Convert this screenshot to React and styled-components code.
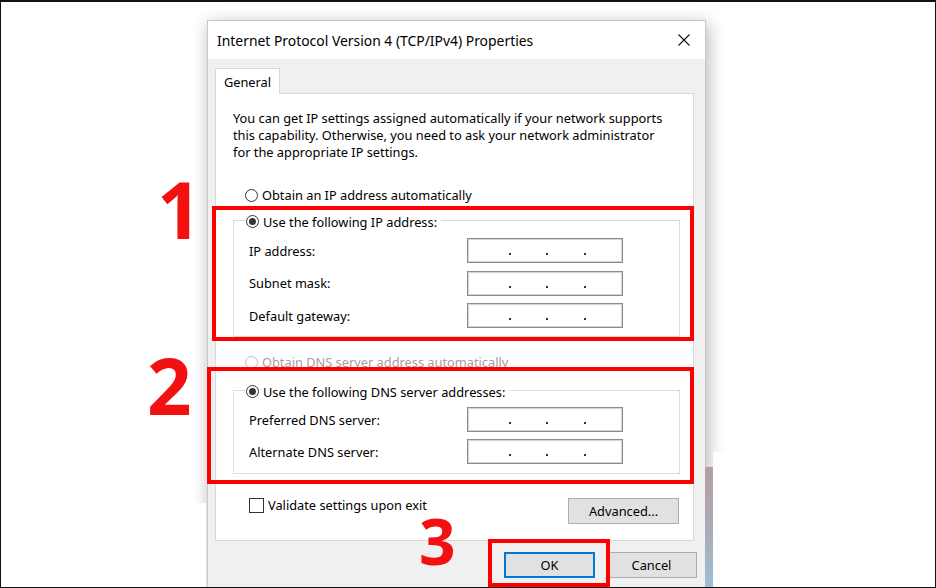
import React from "react";
import styled, { createGlobalStyle } from "styled-components";

const GlobalStyle = createGlobalStyle`
  html, body {
    margin: 0;
    padding: 0;
    background: #fff;
  }
  body {
    font-family: "Noto Sans", "Open Sans", sans-serif;
  }
`;

const Frame = styled.div`
  position: relative;
  width: 936px;
  height: 588px;
  overflow: hidden;
  background: #fff;
  padding: 20px 0 0 207px;
  box-sizing: border-box;

  &::after {
    content: "";
    position: absolute;
    inset: 0;
    border: 1px solid #111;
    border-top-width: 2px;
    pointer-events: none;
    z-index: 20;
  }
`;

const Dialog = styled.div`
  width: 499px;
  box-sizing: border-box;
  background: #f0f0f0;
  border: 1px solid #c8c8c8;
  box-shadow: 2px 4px 16px rgba(0, 0, 0, 0.3);
  font-family: "Noto Sans", sans-serif;
  font-size: 12.8px;
  color: #000;
`;

const TitleBar = styled.div`
  height: 38px;
  background: #fff;
  display: flex;
  align-items: center;
  justify-content: space-between;
  padding: 0 15px 0 9px;
  font-size: 13.9px;
`;

const Body = styled.div`
  padding: 9px 11px 14px 7px;
`;

const TabStrip = styled.div`
  display: flex;
`;

const Tab = styled.div`
  width: 65px;
  height: 26px;
  box-sizing: border-box;
  border: 1px solid #d9d9d9;
  border-bottom: none;
  background: #fff;
  margin-bottom: -1px;
  position: relative;
  z-index: 1;
  display: flex;
  align-items: center;
  justify-content: center;
`;

const Pane = styled.div`
  height: 448px;
  box-sizing: border-box;
  border: 1px solid #d9d9d9;
  background: #fff;
  padding: 16px 13px 0 17px;
`;

const Intro = styled.p`
  margin: 0;
  line-height: 17px;
  white-space: nowrap;
`;

const OptionRow = styled.div`
  display: flex;
  align-items: center;
  gap: 4px;
  height: 18px;
  padding-left: 12px;
  margin-top: ${(p) => p.$top}px;
  color: ${(p) => (p.$disabled ? "#a0a0a0" : "#000")};
`;

const Radio = styled.span`
  display: inline-block;
  vertical-align: middle;
  width: 13px;
  height: 13px;
  box-sizing: border-box;
  border-radius: 50%;
  border: 1px solid ${(p) => (p.$disabled ? "#bcbcbc" : "#333")};
  background: #fff;
  position: relative;

  &::after {
    content: "";
    display: ${(p) => (p.$checked ? "block" : "none")};
    position: absolute;
    left: 2px;
    top: 2px;
    width: 7px;
    height: 7px;
    border-radius: 50%;
    background: #333;
  }
`;

const Group = styled.fieldset`
  margin: ${(p) => p.$top}px 0 0 0;
  border: 1px solid #dcdcdc;
  padding: ${(p) => p.$pad}px 56px ${(p) => p.$bottom}px 15px;
  display: flex;
  flex-direction: column;
  gap: ${(p) => p.$gap}px;
`;

const Legend = styled.legend`
  margin-left: -4px;
  padding: 0 4px 0 1px;
  height: 18px;
  line-height: 18px;
  white-space: nowrap;

  span + span {
    margin-left: 4px;
    vertical-align: middle;
  }
`;

const FieldRow = styled.div`
  display: flex;
  align-items: center;
  justify-content: space-between;
  height: 25px;
`;

const IpBox = styled.div`
  width: 156px;
  height: 25px;
  box-sizing: border-box;
  border: 1px solid #8c8c8c;
  box-shadow: inset 0 0 0 1px #d4d4d4;
  display: flex;
  align-items: center;
  justify-content: center;
  padding-left: 4px;
`;

const Octet = styled.span`
  width: 35px;
`;

const Dot = styled.span`
  width: 2.5px;
  display: flex;
  justify-content: center;

  &::before {
    content: "";
    width: 2px;
    height: 2px;
    margin-top: 7px;
    background: #333;
  }
`;

const Footer = styled.div`
  display: flex;
  justify-content: space-between;
  align-items: flex-start;
  margin-top: 24px;
  padding: 0 1px 0 16px;
`;

const CheckRow = styled.div`
  display: flex;
  align-items: center;
  gap: 4px;
  height: 16px;
  margin-top: -1px;
`;

const Checkbox = styled.span`
  width: 15px;
  height: 15px;
  box-sizing: border-box;
  border: 1px solid #333;
  background: #fff;
`;

const Button = styled.button`
  width: ${(p) => p.$width}px;
  height: 26px;
  box-sizing: border-box;
  padding: 0;
  font-family: inherit;
  font-size: 12.8px;
  color: #000;
  background: #e1e1e1;
  border: ${(p) => (p.$primary ? "2px solid #0078d7" : "1px solid #adadad")};
`;

const ButtonRow = styled.div`
  display: flex;
  justify-content: flex-end;
  gap: 11px;
  margin-top: 11px;
  margin-right: -3px;
`;

const Mark = styled.div`
  position: absolute;
  left: ${(p) => p.$x}px;
  top: ${(p) => p.$y}px;
  width: ${(p) => p.$w}px;
  height: ${(p) => p.$h}px;
  box-sizing: border-box;
  border: 4px solid #ff0000;
  z-index: 5;
`;

const Num = styled.div`
  position: absolute;
  left: ${(p) => p.$x}px;
  top: ${(p) => p.$y}px;
  font-family: "Open Sans", "Noto Sans", sans-serif;
  font-weight: 700;
  font-size: ${(p) => p.$size}px;
  line-height: 1;
  color: #f21010;
  z-index: 5;
`;

const Patch = styled.div`
  position: absolute;
  left: ${(p) => p.$x}px;
  top: ${(p) => p.$y}px;
  width: ${(p) => p.$w}px;
  height: ${(p) => p.$h}px;
  background: ${(p) => p.$bg};
  z-index: 4;
`;

function IpInput() {
  return (
    <IpBox>
      <Octet />
      <Dot />
      <Octet />
      <Dot />
      <Octet />
      <Dot />
      <Octet />
    </IpBox>
  );
}

function Field({ label }) {
  return (
    <FieldRow>
      <span>{label}</span>
      <IpInput />
    </FieldRow>
  );
}

export default function App() {
  return (
    <>
      <GlobalStyle />
      <Frame>
        <Dialog>
          <TitleBar>
            <span>Internet Protocol Version 4 (TCP/IPv4) Properties</span>
            <svg width="12" height="12" viewBox="0 0 12 12">
              <path d="M0.5 0.5 L11.5 11.5 M11.5 0.5 L0.5 11.5" stroke="#111" strokeWidth="1.1" />
            </svg>
          </TitleBar>
          <Body>
            <TabStrip>
              <Tab>General</Tab>
            </TabStrip>
            <Pane>
              <Intro>
                You can get IP settings assigned automatically if your network supports
                <br />
                this capability. Otherwise, you need to ask your network administrator
                <br />
                for the appropriate IP settings.
              </Intro>
              <OptionRow $top={25}>
                <Radio />
                <span>Obtain an IP address automatically</span>
              </OptionRow>
              <Group $top={7} $pad={9} $bottom={8} $gap={7.5}>
                <Legend>
                  <Radio $checked />
                  <span>Use the following IP address:</span>
                </Legend>
                <Field label="IP address:" />
                <Field label="Subnet mask:" />
                <Field label="Default gateway:" />
              </Group>
              <OptionRow $top={16} $disabled>
                <Radio $disabled />
                <span>Obtain DNS server address automatically</span>
              </OptionRow>
              <Group $top={10} $pad={8} $bottom={9} $gap={7}>
                <Legend>
                  <Radio $checked />
                  <span>Use the following DNS server addresses:</span>
                </Legend>
                <Field label="Preferred DNS server:" />
                <Field label="Alternate DNS server:" />
              </Group>
              <Footer>
                <CheckRow>
                  <Checkbox />
                  <span>Validate settings upon exit</span>
                </CheckRow>
                <Button $width={111}>Advanced...</Button>
              </Footer>
            </Pane>
            <ButtonRow>
              <Button $width={91} $primary>OK</Button>
              <Button $width={91}>Cancel</Button>
            </ButtonRow>
          </Body>
        </Dialog>

        <Patch $x={0} $y={503} $w={206} $h={85} $bg="#fff" />
        <Patch $x={713} $y={452} $w={223} $h={136} $bg="#fff" />
        <Patch $x={705} $y={467} $w={8} $h={121} $bg="linear-gradient(#b89ca2, #a9aebb 60%, #9cc0d4)" />

        <Mark $x={212} $y={206} $w={482} $h={135} />
        <Mark $x={207} $y={367} $w={487} $h={117} />
        <Mark $x={488} $y={539} $w={122} $h={48} />

        <Num $x={157} $y={170} $size={78}>1</Num>
        <Num $x={147} $y={346} $size={78}>2</Num>
        <Num $x={419} $y={509} $size={64}>3</Num>
      </Frame>
    </>
  );
}
